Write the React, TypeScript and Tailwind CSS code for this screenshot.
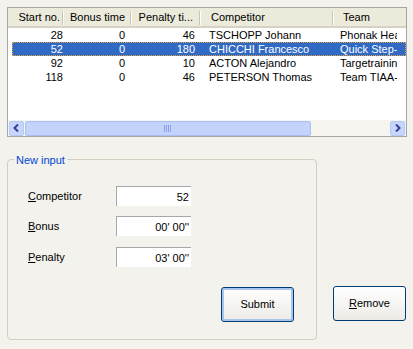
import { useState } from "react";

const rows = [
  { no: 28, bonus: 0, pen: 46, name: "TSCHOPP Johann", team: "Phonak Hearing Systems" },
  { no: 52, bonus: 0, pen: 180, name: "CHICCHI Francesco", team: "Quick Step-Innergetic" },
  { no: 92, bonus: 0, pen: 10, name: "ACTON Alejandro", team: "Targetraining" },
  { no: 118, bonus: 0, pen: 46, name: "PETERSON Thomas", team: "Team TIAA-CREF" },
];

function Sep() {
  return (
    <div className="flex h-[14px] w-[2px] shrink-0">
      <div className="w-px bg-[#c7c5b2]" />
      <div className="w-px bg-white" />
    </div>
  );
}

function Field({ label, value, top }: { label: string; value: string; top: string }) {
  return (
    <div className={`flex items-center ${top}`}>
      <span className="w-[108px] shrink-0 pl-[20px]">
        <span className="underline">{label[0]}</span>
        {label.slice(1)}
      </span>
      <input
        value={value}
        readOnly
        className="h-[20px] w-[75px] border-l border-t border-[#a7a6aa] bg-white pr-[2px] text-right text-black outline-none"
      />
    </div>
  );
}

export default function App() {
  const [selected, setSelected] = useState(1);

  return (
    <div className="h-[349px] w-[413px] overflow-hidden bg-[#f3f2ed] pl-[7px] pt-[7px] font-['Liberation_Sans',sans-serif] text-[11px] text-black">

      {/* LISTA */}

      <div className="flex h-[130px] w-[400px] flex-col border border-[#a5a5a5] bg-white">

        <div className="flex h-[20px] shrink-0 items-center border-b-2 border-[#d6d3c4] bg-[#ebeadb] pt-[1px]">
          <div className="w-[54px] pr-[2px] text-right">Start no.</div>
          <Sep />
          <div className="w-[66px] pr-[5px] text-right">Bonus time</div>
          <Sep />
          <div className="w-[67px] pr-[6px] text-right">Penalty ti...</div>
          <Sep />
          <div className="w-[131px] pl-[10px]">Competitor</div>
          <Sep />
          <div className="flex-1 pl-[9px]">Team</div>
        </div>

        <div className="flex-1">
          {rows.map((r, i) => (
            <div
              key={r.no}
              onClick={() => setSelected(i)}
              className={
                i === selected
                  ? "ml-[4px] flex h-[14px] items-center whitespace-nowrap border border-dotted border-[#e0a040] bg-[#316ac5] leading-[12px] text-white"
                  : "ml-[4px] flex h-[14px] items-center whitespace-nowrap border border-transparent leading-[12px]"
              }
            >
              <div className="w-[51px] pr-[1px] text-right">{r.no}</div>
              <div className="w-[65px] pr-[4px] text-right">{r.bonus}</div>
              <div className="w-[70px] pr-[4px] text-right">{r.pen}</div>
              <div className="w-[132px] pl-[10px]">{r.name}</div>
              <div className="w-[66px] overflow-hidden pl-[9px]">{r.team}</div>
            </div>
          ))}
        </div>

        <div className="flex h-[16px] shrink-0 items-center gap-[1px] bg-[#f6f5f0] px-[1px]">
          <div className="flex h-[15px] w-[15px] items-center justify-center rounded-[2px] border border-[#b7c8f6] bg-[#c6d6fc]">
            <svg width="7" height="8" viewBox="0 0 7 8">
              <path d="M5 0.5 L1.5 4 L5 7.5" stroke="#3a3d92" strokeWidth="2" fill="none" />
            </svg>
          </div>
          <div className="flex h-[15px] w-[286px] items-center justify-center rounded-[2px] border border-[#a9bff2] bg-[#c3d3fb]">
            <svg width="8" height="7" viewBox="0 0 8 7">
              <path d="M0.5 0V7M2.5 0V7M4.5 0V7M6.5 0V7" stroke="#8aa3e6" strokeWidth="1" />
            </svg>
          </div>
          <div className="flex-1" />
          <div className="flex h-[15px] w-[15px] items-center justify-center rounded-[2px] border border-[#b7c8f6] bg-[#c6d6fc]">
            <svg width="7" height="8" viewBox="0 0 7 8">
              <path d="M2 0.5 L5.5 4 L2 7.5" stroke="#3a3d92" strokeWidth="2" fill="none" />
            </svg>
          </div>
        </div>

      </div>

      {/* FORMULARIO */}

      <div className="mt-[22px] flex items-start">

        <div className="relative h-[181px] w-[310px] rounded-[4px] border border-[#d0d0bf]">

          <span className="absolute left-[6px] top-[-8px] bg-[#f3f2ed] px-[2px] text-[#0046d5]">
            New input
          </span>

          <Field label="Competitor" value="52" top="mt-[26px]" />
          <Field label="Bonus" value="00' 00''" top="mt-[10px]" />
          <Field label="Penalty" value="03' 00''" top="mt-[11px]" />

          <div className="mt-[20px] flex justify-end pr-[22px]">
            <button className="h-[35px] w-[73px] rounded-[3px] border border-[#003c74] bg-gradient-to-b from-white to-[#ecebe6] shadow-[inset_0_0_0_2px_#a8c4f0]">
              Submit
            </button>
          </div>

        </div>

        <button className="ml-[16px] mt-[127px] h-[35px] w-[73px] rounded-[3px] border border-[#003c74] bg-gradient-to-b from-white to-[#ecebe6]">
          <span className="underline">R</span>emove
        </button>

      </div>

    </div>
  );
}
